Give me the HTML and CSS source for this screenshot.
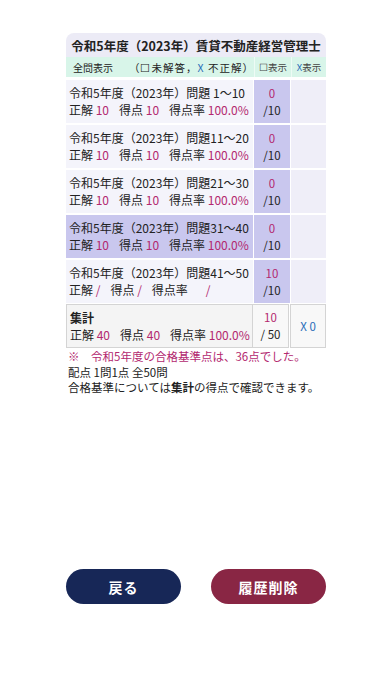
FILE: index.html
```html
<!DOCTYPE html>
<html lang="ja">
<head>
<meta charset="utf-8">
<link rel="stylesheet" href="styles.css">
</head>
<body>
<div class="page">
  <div class="table">
    <div class="title">令和5年度（2023年）賃貸不動産経営管理士</div>
    <div class="head">
      <div class="hc main"><span>全問表示</span><span class="legend">（☐未解答，<span class="x">X</span> 不正解）</span></div>
      <div class="hc c2">☐表示</div>
      <div class="hc c3"><span class="x">X</span> 表示</div>
    </div>
    <div class="row">
      <div class="cell main"><div>令和5年度（2023年）問題 1〜10</div><div>正解 <b class="m">10</b><span class="sp"></span>得点 <b class="m">10</b><span class="sp"></span>得点率 <b class="m">100.0%</b></div></div>
      <div class="cell c2"><div class="m">0</div><div>/10</div></div>
      <div class="cell c3"></div>
    </div>
    <div class="row">
      <div class="cell main"><div>令和5年度（2023年）問題11〜20</div><div>正解 <b class="m">10</b><span class="sp"></span>得点 <b class="m">10</b><span class="sp"></span>得点率 <b class="m">100.0%</b></div></div>
      <div class="cell c2"><div class="m">0</div><div>/10</div></div>
      <div class="cell c3"></div>
    </div>
    <div class="row">
      <div class="cell main"><div>令和5年度（2023年）問題21〜30</div><div>正解 <b class="m">10</b><span class="sp"></span>得点 <b class="m">10</b><span class="sp"></span>得点率 <b class="m">100.0%</b></div></div>
      <div class="cell c2"><div class="m">0</div><div>/10</div></div>
      <div class="cell c3"></div>
    </div>
    <div class="row">
      <div class="cell main hl"><div>令和5年度（2023年）問題31〜40</div><div>正解 <b class="m">10</b><span class="sp"></span>得点 <b class="m">10</b><span class="sp"></span>得点率 <b class="m">100.0%</b></div></div>
      <div class="cell c2"><div class="m">0</div><div>/10</div></div>
      <div class="cell c3"></div>
    </div>
    <div class="row">
      <div class="cell main"><div>令和5年度（2023年）問題41〜50</div><div>正解 <b class="m">/</b><span class="sp"></span>得点 <b class="m">/</b><span class="sp"></span>得点率<span class="sp2"></span><b class="m">/</b></div></div>
      <div class="cell c2"><div class="m">10</div><div>/10</div></div>
      <div class="cell c3"></div>
    </div>
    <div class="row sum">
      <div class="cell main"><div class="bold">集計</div><div>正解 <b class="m">40</b><span class="sp"></span>得点 <b class="m">40</b><span class="sp"></span>得点率 <b class="m">100.0%</b></div></div>
      <div class="cell c2"><div class="m">10</div><div>/ 50</div></div>
      <div class="cell c3 xcount"><span class="x">X 0</span></div>
    </div>
  </div>
  <div class="notes">
    <div class="m">※　令和5年度の合格基準点は、36点でした。</div>
    <div>配点 1問1点 全50問</div>
    <div>合格基準については<b>集計</b>の得点で確認できます。</div>
  </div>
  <div class="buttons">
    <div class="btn back">戻る</div>
    <div class="btn del">履歴削除</div>
  </div>
</div>
</body>
</html>
```
FILE: styles.css
```css
html, body {
  margin: 0;
  padding: 0;
  background: #ffffff;
}
body {
  font-family: "Noto Sans CJK JP", "Noto Sans", sans-serif;
  color: #222;
  width: 392px;
  height: 696px;
}
.page {
  box-sizing: border-box;
  height: 696px;
  padding: 33px 66px 92px 66px;
  display: flex;
  flex-direction: column;
}
.table {
  width: 260px;
  border-radius: 8px 8px 0 0;
  overflow: hidden;
  display: flex;
  flex-direction: column;
}
.title {
  height: 24px;
  background: #ecebf6;
  font-size: 12.5px;
  font-weight: bold;
  display: flex;
  align-items: center;
  justify-content: center;
  white-space: nowrap;
}
.head {
  height: 20px;
  display: flex;
  background: #d8f5e9;
  font-size: 10px;
  margin-bottom: 1px;
}
.hc {
  display: flex;
  align-items: center;
}
.hc.main {
  flex: 0 0 187px;
  padding-left: 7px;
  box-sizing: border-box;
  white-space: nowrap;
}
.legend {
  margin-left: 16px;
  font-size: 10.5px;
  letter-spacing: 1px;
}
.hc.c2 {
  flex: 0 0 36px;
  justify-content: center;
  border-left: 1px solid #eefbf5;
  color: #444;
  font-size: 9.5px;
}
.hc.c3 {
  flex: 1;
  justify-content: center;
  border-left: 1px solid #eefbf5;
  color: #444;
  font-size: 9.5px;
}
.x {
  color: #2a6db8;
}
.row {
  display: flex;
  height: 43px;
  margin-top: 2px;
  font-size: 12px;
  line-height: 17px;
}
.cell {
  display: flex;
  flex-direction: column;
  justify-content: center;
  box-sizing: border-box;
}
.cell.main {
  flex: 0 0 187px;
  padding-left: 3px;
  padding-bottom: 1px;
  background: #f4f4fb;
  white-space: nowrap;
}
.cell.main.hl {
  background: #c9c7ee;
}
.cell.c2 {
  flex: 0 0 36px;
  margin-left: 1px;
  background: #c9c7ee;
  align-items: center;
  font-size: 11.5px;
  line-height: 17px;
}
.cell.c3 {
  flex: 1;
  margin-left: 1px;
  background: #efeef8;
}
.m {
  color: #b3286f;
  font-weight: normal;
}
b.m {
  font-weight: normal;
}
.sp {
  display: inline-block;
  width: 10px;
}
.sp2 {
  display: inline-block;
  width: 18px;
}
.row.sum {
  height: 44px;
  margin-top: 1px;
}
.row.sum .cell {
  border: 1px solid #d4d4d4;
  background: #f6f6f6;
}
.row.sum .cell.main {
  background: #f4f4f4;
}
.row.sum .cell.c2 {
  margin-left: 0;
  border-left: none;
  background: #f8f8f8;
}
.row.sum .cell.c3 {
  margin-left: 1px;
  background: #f8f8f8;
}
.bold {
  font-weight: bold;
}
.xcount {
  align-items: center;
  font-size: 11.5px;
}
.notes {
  margin-top: 1px;
  font-size: 11.5px;
  line-height: 15.5px;
  padding-left: 2px;
  white-space: nowrap;
}
.notes b {
  font-weight: bold;
}
.buttons {
  margin-top: auto;
  display: flex;
  justify-content: space-between;
}
.btn {
  width: 115px;
  height: 35px;
  border-radius: 18px;
  color: #ffffff;
  font-size: 14px;
  font-weight: bold;
  display: flex;
  align-items: center;
  justify-content: center;
  letter-spacing: 1px;
}
.back {
  background: #172757;
}
.del {
  background: #892644;
}
```
